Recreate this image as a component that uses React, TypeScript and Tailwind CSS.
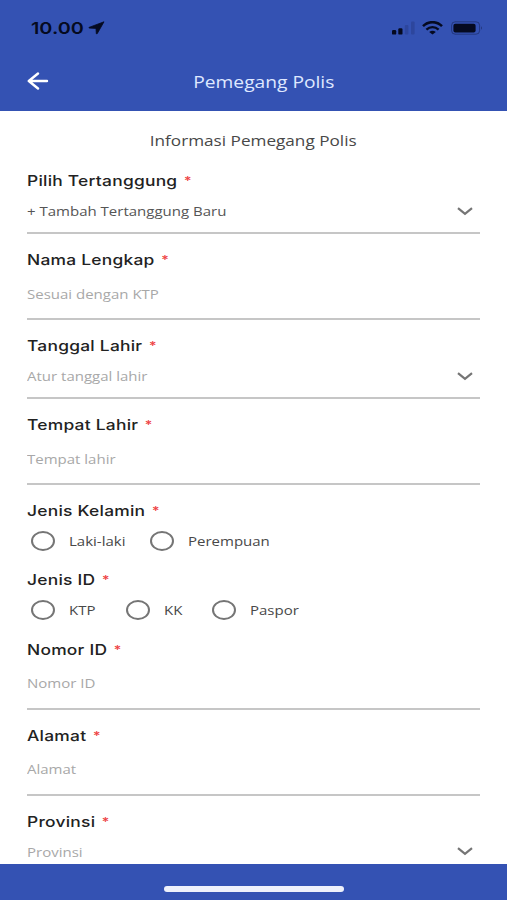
import { ReactNode } from "react"
import clsx from "clsx"

type FormItem = {
    label: string;
    type: "select" | "input" | "radio";
    text?: string;
    filled?: boolean;
    options?: { name: string; width: string }[];
};

const formItems: FormItem[] = [
    { label: "Pilih Tertanggung", type: "select", text: "+ Tambah Tertanggung Baru", filled: true },
    { label: "Nama Lengkap", type: "input", text: "Sesuai dengan KTP" },
    { label: "Tanggal Lahir", type: "select", text: "Atur tanggal lahir" },
    { label: "Tempat Lahir", type: "input", text: "Tempat lahir" },
    {
        label: "Jenis Kelamin",
        type: "radio",
        options: [
            { name: "Laki-laki", width: "w-[119.5px]" },
            { name: "Perempuan", width: "w-[140px]" },
        ],
    },
    {
        label: "Jenis ID",
        type: "radio",
        options: [
            { name: "KTP", width: "w-[95px]" },
            { name: "KK", width: "w-[86.5px]" },
            { name: "Paspor", width: "w-[120px]" },
        ],
    },
    { label: "Nomor ID", type: "input", text: "Nomor ID" },
    { label: "Alamat", type: "input", text: "Alamat" },
    { label: "Provinsi", type: "select", text: "Provinsi" },
]

// Wide text used all over the form
const Wide = ({ children, className }: { children: ReactNode; className?: string }) => (
    <span className={clsx("inline-block whitespace-nowrap scale-x-[1.2]", className)}>{children}</span>
)

const StatusBar = () => (
    <div className="flex h-[55px] items-center justify-between pl-[31px] pr-[24px] text-[#050a20]">
        <div className="flex items-center">
            <div className="w-[57px]">
                <Wide className="origin-left pt-px font-['Inter'] text-[16.5px] font-semibold">10.00</Wide>
            </div>
            <svg width="17" height="14" viewBox="0 0 17 14" fill="currentColor" stroke="currentColor" strokeWidth="0.8" strokeLinejoin="round">
                <path d="M16 0.8 L1 6.4 Q0.6 7 1.4 7.1 L8 7.4 L8.3 12.5 Q8.6 13.2 9.2 12.7 Z" />
            </svg>
        </div>
        <div className="flex items-center">
            <svg width="23" height="14" viewBox="0 0 23 14" fill="currentColor">
                <rect x="0" y="9" width="4.2" height="4.6" rx="1.2" />
                <rect x="6.3" y="7.2" width="4.2" height="6.4" rx="1.2" />
                <rect x="12.8" y="4" width="3.6" height="9.6" rx="1" opacity="0.15" />
                <rect x="19" y="0.5" width="3.6" height="13" rx="1" opacity="0.15" />
            </svg>
            <svg className="ml-[7px]" width="21" height="14" viewBox="0 0 21 14" fill="none" stroke="currentColor">
                <path d="M1 5.2 C6.3 -0.2 14.7 -0.2 20 5.2" strokeWidth="2.5" />
                <path d="M4.4 8.6 C8 5.2 13 5.2 16.6 8.6" strokeWidth="2.3" />
                <path d="M7.2 10.9 Q10.5 8.5 13.8 10.9 L10.5 13.6 Z" fill="currentColor" stroke="none" />
            </svg>
            <svg className="ml-[8px]" width="32" height="14" viewBox="0 0 32 14" fill="none">
                <rect x="0.6" y="0.8" width="28" height="12.4" rx="3.6" stroke="currentColor" strokeOpacity="0.35" />
                <rect x="2.4" y="2.7" width="22.2" height="8.8" rx="2" fill="currentColor" />
                <path d="M30 5 Q31.6 7 30 9 Z" fill="currentColor" fillOpacity="0.5" />
            </svg>
        </div>
    </div>
)

const ChevronIcon = () => (
    <svg width="16" height="9" viewBox="0 0 16 9" fill="none" stroke="#757575" strokeWidth="2.2">
        <path d="M1 1.2 L8 6.9 L15 1.2" />
    </svg>
)

const Label = ({ text }: { text: string }) => (
    <div className="h-6 leading-6">
        <Wide className="origin-left font-['Inter'] text-[14.5px] font-[450] tracking-[0.2px] text-[#222222]">
            {text}
            <span className="ml-[5.5px] align-[1px] text-[12px] leading-none font-medium text-[#ee4444]">*</span>
        </Wide>
    </div>
)

const Radio = ({ name, width }: { name: string; width: string }) => (
    <label className={clsx("flex items-center", width)}>
        <span className="h-5 w-6 shrink-0 rounded-[50%] border-2 border-[#757575]" />
        <Wide className="ml-[14px] origin-left pt-[2px] text-[12.5px] font-medium text-[#484848]">{name}</Wide>
    </label>
)

const Field = ({ item }: { item: FormItem }) => {
    if (item.type === "radio") {
        return (
            <div className="h-[69.3px]">
                <Label text={item.label} />
                <div className="flex h-[38px] items-center pl-[3.5px]">
                    {item.options?.map((option) => (
                        <Radio key={option.name} name={option.name} width={option.width} />
                    ))}
                </div>
            </div>
        )
    }

    const isSelect = item.type === "select"
    return (
        <div className="mb-[13px]">
            <Label text={item.label} />
            <div
                className={clsx(
                    "flex items-center justify-between border-b-2 border-[#c6c6c6] pr-[7px]",
                    isSelect ? "h-[42px] pb-[2px]" : "h-[49px]"
                )}
            >
                <Wide
                    className={clsx(
                        "origin-left text-[12.5px]",
                        isSelect ? "pt-[3px]" : "pt-[1px]",
                        item.filled ? "font-medium text-[#555555]" : "text-[#a8a8a8]"
                    )}
                >
                    {item.text}
                </Wide>
                {isSelect && <ChevronIcon />}
            </div>
        </div>
    )
}

const App = () => {
    return (
        <div className="flex h-[900px] w-[507px] flex-col overflow-hidden bg-white font-['Open_Sans',sans-serif]">
            <header className="h-[110.5px] shrink-0 bg-[#3452b3]">
                <StatusBar />
                <div className="grid h-[53px] grid-cols-[80px_1fr_60px] items-center">
                    <svg className="ml-[27px] -mt-[2px]" width="22" height="18" viewBox="0 0 22 18" fill="none" stroke="white" strokeWidth="2.4" strokeLinecap="round" strokeLinejoin="round">
                        <path d="M20 9 H1.8 M11 1.5 L1.8 9 L11 16.5" />
                    </svg>
                    <h1 className="text-center">
                        <Wide className="text-[16px] font-medium text-[#dfe8ff]">Pemegang Polis</Wide>
                    </h1>
                </div>
            </header>

            <main className="min-h-0 flex-1 overflow-hidden px-[27px]">
                <h2 className="flex h-[57.5px] items-center justify-center pt-[3px]">
                    <Wide className="text-[14.3px] text-[#484848]">Informasi Pemegang Polis</Wide>
                </h2>
                {formItems.map((item) => (
                    <Field key={item.label} item={item} />
                ))}
            </main>

            {/* Home indicator */}
            <footer className="flex h-[36.5px] shrink-0 justify-center bg-[#3452b3] pt-[22px]">
                <div className="h-[6px] w-[180px] rounded-full bg-[#eef1fb]" />
            </footer>
        </div>
    )
}

export default App
